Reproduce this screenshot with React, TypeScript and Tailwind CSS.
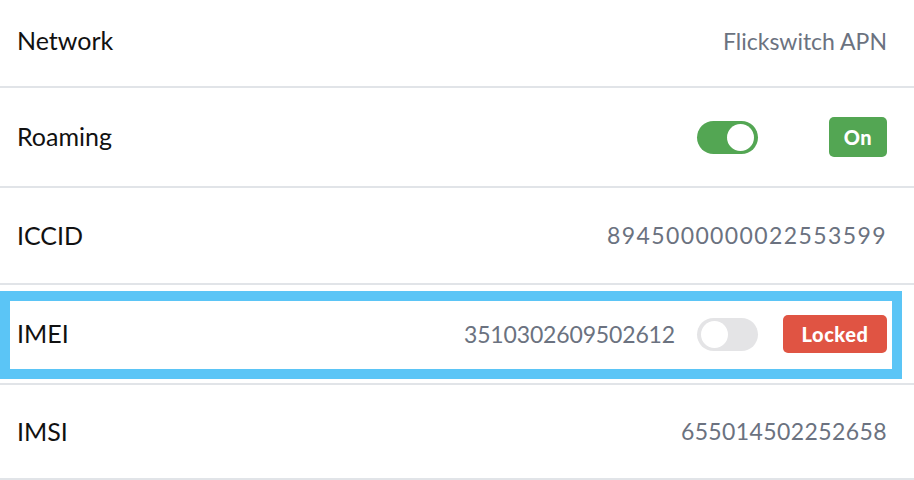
import React from "react";

const font = { fontFamily: "Lato, 'Open Sans', sans-serif" };

function Toggle({ on }: { on: boolean }) {
  return (
    <div
      className={`flex h-[33px] w-[61px] items-center rounded-full px-[4px] ${
        on ? "justify-end bg-[#53a653]" : "justify-start bg-[#e4e4e6]"
      }`}
    >
      <div className="h-[27px] w-[27px] rounded-full bg-white" />
    </div>
  );
}

function Badge({ text, color, w, h }: { text: string; color: string; w: string; h: string }) {
  return (
    <div
      className={`flex items-center justify-center rounded-[5px] text-[20px] font-black tracking-[0.5px] text-white ${color} ${w} ${h}`}
    >
      {text}
    </div>
  );
}

function Row({
  label,
  h,
  children,
  highlight,
  extra = "",
}: {
  label: string;
  h: string;
  children?: React.ReactNode;
  highlight?: boolean;
  extra?: string;
}) {
  return (
    <div
      className={`relative flex items-center justify-between border-b-2 border-[#e1e4e8] pl-[17px] pr-[27px] ${h} ${extra}`}
    >
      <span className="text-[25px] text-[#111]">{label}</span>
      <div className="flex items-center">{children}</div>
      {highlight && (
        <div className="pointer-events-none absolute bottom-[4px] left-0 right-[12px] top-[6px] border-[10px] border-[#5bc5f6]" />
      )}
    </div>
  );
}

const valueCls = "text-[23px] text-[#6b7280]";

export default function App() {
  return (
    <div className="h-[480px] w-[914px] overflow-hidden bg-white" style={font}>
      <Row label="Network" h="h-[88px]" extra="pb-[4px]">
        <span className={valueCls}>Flickswitch APN</span>
      </Row>
      <Row label="Roaming" h="h-[100px]">
        <Toggle on />
        <div className="ml-[25px] flex w-[104px] justify-end">
          <Badge text="On" color="bg-[#53a653]" w="w-[58px]" h="h-[40px]" />
        </div>
      </Row>
      <Row label="ICCID" h="h-[97px]">
        <span className={`${valueCls} tracking-[1.4px]`}>8945000000022553599</span>
      </Row>
      <Row label="IMEI" h="h-[100px]" highlight>
        <span className={`${valueCls} tracking-[-0.15px]`}>3510302609502612</span>
        <div className="ml-[22px]">
          <Toggle on={false} />
        </div>
        <div className="ml-[25px] flex w-[104px] justify-end">
          <Badge text="Locked" color="bg-[#e05443]" w="w-[104px]" h="h-[38px]" />
        </div>
      </Row>
      <Row label="IMSI" h="h-[95px]">
        <span className={`${valueCls} tracking-[0.4px]`}>655014502252658</span>
      </Row>
    </div>
  );
}
